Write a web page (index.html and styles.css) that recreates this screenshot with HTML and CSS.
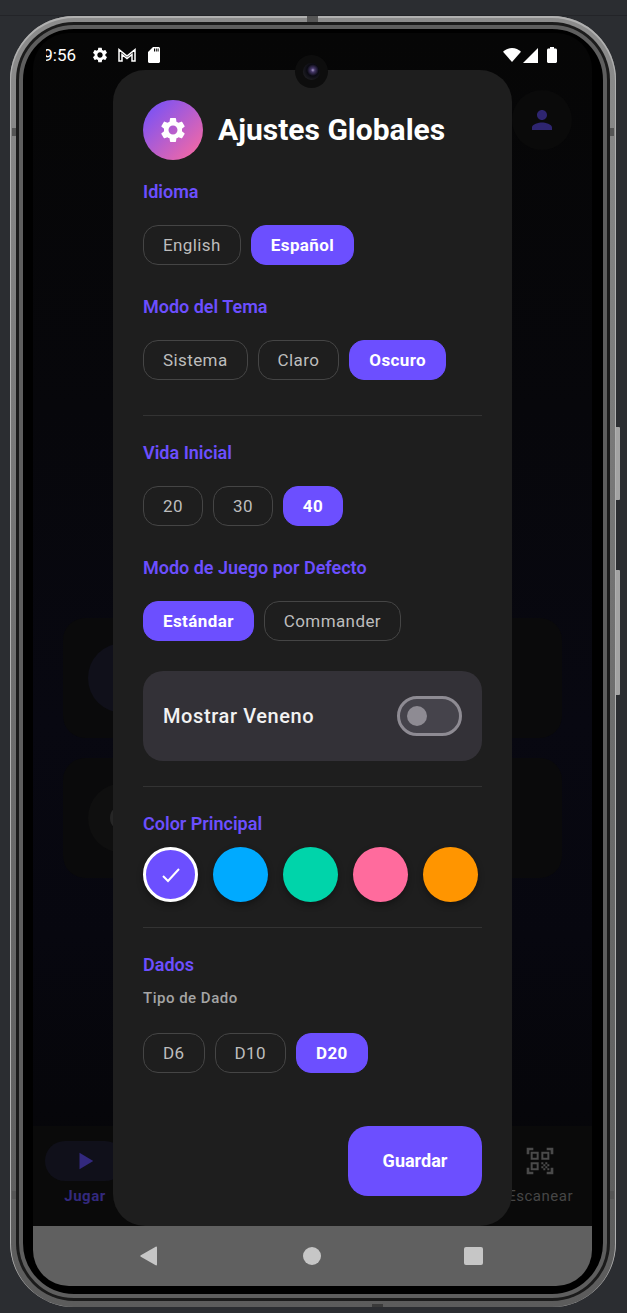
FILE: index.html
```html
<!DOCTYPE html>
<html lang="es">
<head>
  <meta charset="UTF-8" />
  <title>Ajustes Globales</title>
  <link rel="stylesheet" href="styles.css">
</head>
<body>
  <div class="topline"></div>
  <div class="phone">
    <span class="side-btn side-btn-power"></span>
    <span class="side-btn side-btn-volume"></span>
    <span class="mark mark-top"></span>
    <span class="mark mark-bottom"></span>
    <span class="mark mark-side mark-lt"></span>
    <span class="mark mark-side mark-rt"></span>
    <span class="mark mark-side mark-lb"></span>
    <span class="mark mark-side mark-rb"></span>
    <div class="ring-mid">
      <div class="ring-in">
        <div class="screen">

          <div class="statusbar">
            <span class="time"><span>9:56</span></span>
            <svg class="st-gear" viewBox="0 0 24 24"><path d="M19.14 12.94c.04-.3.06-.61.06-.94 0-.32-.02-.64-.07-.94l2.03-1.58a.49.49 0 0 0 .12-.61l-1.92-3.32a.488.488 0 0 0-.59-.22l-2.39.96c-.5-.38-1.03-.7-1.62-.94l-.36-2.54a.484.484 0 0 0-.48-.41h-3.84c-.24 0-.43.17-.47.41l-.36 2.54c-.59.24-1.13.57-1.62.94l-2.39-.96c-.22-.08-.47 0-.59.22L2.74 8.87c-.12.21-.08.47.12.61l2.03 1.58c-.05.3-.09.63-.09.94s.02.64.07.94l-2.03 1.58a.49.49 0 0 0-.12.61l1.92 3.32c.12.22.37.29.59.22l2.39-.96c.5.38 1.03.7 1.62.94l.36 2.54c.05.24.24.41.48.41h3.84c.24 0 .44-.17.47-.41l.36-2.54c.59-.24 1.13-.56 1.62-.94l2.39.96c.22.08.47 0 .59-.22l1.92-3.32c.12-.22.07-.47-.12-.61l-2.01-1.58zM12 15.6c-1.98 0-3.6-1.62-3.6-3.6s1.62-3.6 3.6-3.6 3.6 1.62 3.6 3.6-1.62 3.6-3.6 3.6z"/></svg>
            <svg class="st-mail" viewBox="0 0 18 14"><path d="M1 13V1.600L9 8l8-6.400V13h-3V6.500L9 10.500 4 6.500V13z"/></svg>
            <svg class="st-sd" viewBox="0 0 12 16"><path d="M5 0h5.500C11.300 0 12 .7 12 1.500v13c0 .8-.7 1.500-1.500 1.500h-9C.7 16 0 15.300 0 14.500V5zM6 1.500v3h1v-3zm1.800 0v3h1v-3zm1.800 0v3h1v-3z" fill-rule="evenodd"/></svg>
            <span class="st-space"></span>
            <svg class="st-wifi" viewBox="0 0 18 14"><path d="M0 3.800C2.400 1.500 5.500 0 9 0s6.600 1.500 9 3.800L9 14z"/></svg>
            <svg class="st-signal" viewBox="0 0 15 15"><path d="M15 0v15H0z"/></svg>
            <svg class="st-batt" viewBox="0 0 10 16"><path d="M3 0h4v1.500h1.500c.8 0 1.500.7 1.500 1.500v11.500c0 .8-.7 1.500-1.500 1.500h-7C.7 16 0 15.300 0 14.500V3c0-.8.7-1.500 1.500-1.500H3z"/></svg>
          </div>

          <div class="app">
            <div class="app-top">
              <div class="avatar">
                <svg viewBox="0 0 24 24"><path d="M12 12c2.210 0 4-1.790 4-4s-1.790-4-4-4-4 1.790-4 4 1.790 4 4 4zm0 2c-2.670 0-8 1.340-8 4v2h16v-2c0-2.660-5.330-4-8-4z"/></svg>
              </div>
            </div>
            <div class="bg-card"><div class="bg-circle bg-circle-blue"></div></div>
            <div class="bg-card"><div class="bg-circle"><span class="bg-glyph"></span></div></div>
          </div>

          <div class="bottomnav">
            <div class="nav-item nav-item-active">
              <div class="nav-pill">
                <svg viewBox="0 0 24 24"><path d="M6 3l15 9-15 9z"/></svg>
              </div>
              <span>Jugar</span>
            </div>
            <div class="nav-item nav-item-scan">
              <svg viewBox="0 0 24 24"><path d="M9.500 6.500v3h-3v-3h3M11 5H5v6h6V5zm-1.500 9.500v3h-3v-3h3M11 13H5v6h6v-6zm6.500-6.500v3h-3v-3h3M19 5h-6v6h6V5zm-6 8h1.500v1.500H13V13zm1.500 1.500H16V16h-1.500v-1.500zM16 13h1.500v1.500H16V13zm-3 3h1.500v1.500H13V16zm1.500 1.500H16V19h-1.500v-1.500zM16 16h1.500v1.500H16V16zm1.500-1.500H19V16h-1.500v-1.500zm0 3H19V19h-1.500v-1.500zM22 7h-2V4h-3V2h5v5zm0 15v-5h-2v3h-3v2h5zM2 22h5v-2H4v-3H2v5zM2 2v5h2V4h3V2H2z"/></svg>
              <span>Escanear</span>
            </div>
          </div>

          <div class="sysnav">
            <svg class="sys-back" viewBox="0 0 18 20"><path d="M17 1.500v17c0 .8-.6 1.200-1.300.8L.8 10.800c-.6-.4-.6-1.200 0-1.600L15.700.7c.7-.4 1.300 0 1.300.8z"/></svg>
            <span class="sys-home"></span>
            <span class="sys-recent"></span>
          </div>

          <!-- dialogo de ajustes -->
          <div class="modal">
            <div class="modal-head">
              <div class="head-icon">
                <svg viewBox="0 0 24 24"><path d="M19.140 12.940c.04-.3.06-.61.06-.94 0-.32-.02-.64-.07-.94l2.030-1.580a.49.49 0 0 0 .12-.61l-1.920-3.320a.488.488 0 0 0-.59-.22l-2.390.96c-.5-.38-1.030-.7-1.620-.94l-.36-2.540a.484.484 0 0 0-.48-.41h-3.840c-.24 0-.43.17-.47.41l-.36 2.540c-.59.24-1.130.57-1.620.94l-2.390-.96c-.22-.08-.47 0-.59.22L2.740 8.870c-.12.21-.08.47.12.61l2.030 1.580c-.05.3-.09.63-.09.94s.02.64.07.94l-2.030 1.580a.49.49 0 0 0-.12.61l1.920 3.320c.12.22.37.29.59.22l2.390-.96c.5.38 1.030.7 1.620.94l.36 2.540c.05.24.24.41.48.41h3.840c.24 0 .44-.17.47-.41l.36-2.540c.59-.24 1.130-.56 1.620-.94l2.390.96c.22.08.47 0 .59-.22l1.920-3.320c.12-.22.07-.47-.12-.61l-2.010-1.580zM12 15.600c-1.980 0-3.600-1.620-3.600-3.600s1.620-3.600 3.600-3.600 3.600 1.620 3.600 3.600-1.620 3.600-3.600 3.600z"/></svg>
              </div>
              <h1>Ajustes Globales</h1>
            </div>

            <h2 class="label label-first">Idioma</h2>
            <div class="chips">
              <span class="chip">English</span>
              <span class="chip chip-on">Español</span>
            </div>

            <h2 class="label">Modo del Tema</h2>
            <div class="chips">
              <span class="chip">Sistema</span>
              <span class="chip">Claro</span>
              <span class="chip chip-on">Oscuro</span>
            </div>

            <hr class="divider">

            <h2 class="label label-after">Vida Inicial</h2>
            <div class="chips">
              <span class="chip">20</span>
              <span class="chip">30</span>
              <span class="chip chip-on">40</span>
            </div>

            <h2 class="label">Modo de Juego por Defecto</h2>
            <div class="chips">
              <span class="chip chip-on">Estándar</span>
              <span class="chip">Commander</span>
            </div>

            <div class="toggle-row">
              <span class="toggle-text">Mostrar Veneno</span>
              <span class="switch"><span class="switch-thumb"></span></span>
            </div>

            <hr class="divider divider-toggle">

            <h2 class="label label-after">Color Principal</h2>
            <div class="swatches">
              <span class="swatch swatch-on">
                <svg viewBox="0 0 24 24"><path d="M4 13l5 5L20 6"/></svg>
              </span>
              <span class="swatch swatch-blue"></span>
              <span class="swatch swatch-green"></span>
              <span class="swatch swatch-pink"></span>
              <span class="swatch swatch-orange"></span>
            </div>

            <hr class="divider divider-toggle">

            <h2 class="label label-after">Dados</h2>
            <p class="sublabel">Tipo de Dado</p>
            <div class="chips">
              <span class="chip">D6</span>
              <span class="chip">D10</span>
              <span class="chip chip-on">D20</span>
            </div>

            <div class="modal-foot">
              <span class="save">Guardar</span>
            </div>
          </div>

          <div class="camera"><span class="lens"></span></div>
        </div>
      </div>
    </div>
  </div>
</body>
</html>
```

FILE: styles.css
```css
* {
  box-sizing: border-box;
}

body {
  margin: 0;
  width: 627px;
  height: 1313px;
  overflow: hidden;
  background-color: #2b2d31;
  padding: 0 11px 6px 10px;
  font-family: Roboto, "Liberation Sans", sans-serif;
}

.topline {
  height: 16px;
  margin: 0 -11px 0 -10px;
  border-bottom: 1px solid #232428;
}

/* marco del telefono */
.phone {
  position: relative;
  width: 606px;
  height: 1291px;
  border-radius: 64px;
  padding: 6px;
  background: linear-gradient(#8c8c8c, #6f6f6f 50%, #5c5c5c);
  box-shadow: inset 0 1px 0 1px #b0b0b0;
}

.ring-mid {
  height: 100%;
  border-radius: 58px;
  padding: 3px;
  background: #1b1b1b;
}

.ring-in {
  height: 100%;
  border-radius: 55px;
  border: 4px solid #5e5e5e;
  background: #000;
  padding: 4px 11px 8px 10px;
}

.side-btn {
  position: absolute;
  right: -4px;
  width: 4px;
  background: #a3a3a3;
  border-radius: 0 1px 1px 0;
}

.side-btn-power {
  top: 411px;
  height: 73px;
}

.side-btn-volume {
  top: 554px;
  height: 125px;
}

.mark {
  position: absolute;
  background: #555;
}

.mark-top {
  left: 297px;
  top: 0;
  width: 11px;
  height: 6px;
}

.mark-bottom {
  left: 362px;
  bottom: 0;
  width: 11px;
  height: 3px;
  background: #3a3a3a;
}

.mark-side {
  width: 4px;
  height: 8px;
}

.mark-lt {
  left: 2px;
  top: 112px;
}

.mark-rt {
  right: 2px;
  top: 112px;
}

.mark-lb {
  left: 2px;
  bottom: 108px;
}

.mark-rb {
  right: 2px;
  bottom: 108px;
}

.screen {
  position: relative;
  height: 100%;
  display: flex;
  flex-direction: column;
  border-radius: 36px;
  overflow: hidden;
  background: linear-gradient(#060606 0, #07070b 30%, #080811 55%, #07070f 72%, #050505 100%);
}

/* barra de estado */
.statusbar {
  height: 37px;
  flex: none;
  display: flex;
  align-items: center;
  padding-top: 7px;
  padding-right: 35px;
  color: #fff;
}

.statusbar svg {
  fill: #fff;
  flex: none;
}

.time {
  width: 30px;
  margin-left: 13px;
  display: flex;
  justify-content: flex-end;
  overflow: hidden;
  font-size: 17px;
  white-space: nowrap;
}

.st-gear {
  width: 18px;
  height: 18px;
  margin-left: 15px;
}

.st-mail {
  width: 18px;
  height: 14px;
  margin-left: 9px;
}

.statusbar .st-mail {
  fill: none;
}

.st-mail path {
  fill: none;
  stroke: #fff;
  stroke-width: 1.5;
}

.st-sd {
  width: 12px;
  height: 16px;
  margin-left: 12px;
}

.st-space {
  flex: 1;
}

.st-wifi {
  width: 18px;
  height: 14px;
}

.st-signal {
  width: 15px;
  height: 15px;
  margin-left: 2px;
}

.st-batt {
  width: 10px;
  height: 16px;
  margin-left: 9px;
}

/* pantalla de fondo */
.app {
  flex: 1;
  display: flex;
  flex-direction: column;
  padding: 0 30px;
  gap: 20px;
}

.app-top {
  height: 508px;
  margin-top: 20px;
  display: flex;
  justify-content: flex-end;
  margin-right: -10px;
}

.avatar {
  width: 60px;
  height: 60px;
  border-radius: 50%;
  background: #0a0a0a;
  display: flex;
  align-items: center;
  justify-content: center;
}

.avatar svg {
  width: 30px;
  height: 30px;
  fill: #2e2570;
}

.bg-card {
  height: 120px;
  border-radius: 22px;
  background: #0a0a0b;
  display: flex;
  align-items: center;
  padding-left: 25px;
}

.bg-circle {
  width: 70px;
  height: 70px;
  border-radius: 50%;
  background: #0f0f0f;
  display: flex;
  align-items: center;
  justify-content: center;
}

.bg-circle-blue {
  background: #10101a;
}

.bg-glyph {
  width: 26px;
  height: 26px;
  border-radius: 50%;
  border: 6px solid #262626;
}

/* navegacion inferior */
.bottomnav {
  height: 100px;
  flex: none;
  background: #0a0a0a;
  display: flex;
  justify-content: space-between;
  padding: 15px 19px 0 12px;
}

.nav-item {
  display: flex;
  flex-direction: column;
  align-items: center;
  font-size: 15px;
  letter-spacing: 0.5px;
  color: #3b3b3b;
}

.nav-item-active {
  font-weight: 700;
  color: #33297e;
}

.nav-item-active span {
  margin-top: 6px;
}

.nav-pill {
  width: 80px;
  height: 40px;
  border-radius: 20px;
  background: #10101a;
  display: flex;
  align-items: center;
  justify-content: center;
}

.nav-pill svg {
  width: 22px;
  height: 22px;
  fill: #33297e;
}

.nav-item-scan {
  color: #464646;
}

.nav-item-scan svg {
  width: 32px;
  height: 32px;
  margin-top: 4px;
  fill: #4a4a4a;
}

.nav-item-scan span {
  margin-top: 10px;
}

/* barra del sistema */
.sysnav {
  height: 60px;
  flex: none;
  background: #606060;
  display: flex;
  align-items: center;
  padding-left: 107px;
}

.sys-back {
  width: 18px;
  height: 20px;
  fill: #c6c6c6;
}

.sys-home {
  width: 18px;
  height: 18px;
  margin-left: 145px;
  border-radius: 50%;
  background: #c6c6c6;
}

.sys-recent {
  width: 19px;
  height: 18px;
  margin-left: 143px;
  border-radius: 2px;
  background: #c6c6c6;
}

/* dialogo */
.modal {
  position: absolute;
  left: 80px;
  right: 80px;
  top: 37px;
  bottom: 60px;
  border-radius: 32px;
  background: #1e1e1e;
  padding: 30px;
  display: flex;
  flex-direction: column;
}

.modal > * {
  flex: none;
}

.modal-head {
  display: flex;
  align-items: center;
  gap: 15px;
}

.head-icon {
  width: 60px;
  height: 60px;
  border-radius: 50%;
  background: linear-gradient(135deg, #6c4fff, #ff6b9d);
  display: flex;
  align-items: center;
  justify-content: center;
}

.head-icon svg {
  width: 30px;
  height: 30px;
  fill: #fff;
}

h1 {
  margin: 0;
  font-size: 30px;
  line-height: 36px;
  font-weight: 700;
  color: #fff;
}

.label {
  margin: 32px 0 23px;
  font-size: 18px;
  line-height: 20px;
  font-weight: 600;
  color: #6c4fff;
}

.label-first {
  margin-top: 22px;
}

.label-after {
  margin-top: 27px;
}

.chips {
  display: flex;
  gap: 10px;
}

.chip {
  height: 40px;
  padding: 0 19px;
  display: flex;
  align-items: center;
  border: 1px solid #454545;
  border-radius: 15px;
  font-size: 17px;
  letter-spacing: 0.4px;
  color: #bdbdbd;
}

.chip-on {
  background: #6c4fff;
  border-color: #6c4fff;
  color: #fff;
  font-weight: 700;
}

.divider {
  width: 100%;
  height: 1px;
  margin: 35px 0 0;
  border: 0;
  background: #333;
}

.divider-toggle {
  margin-top: 25px;
}

.toggle-row {
  height: 90px;
  margin-top: 30px;
  padding: 0 20px;
  border-radius: 20px;
  background: #333137;
  display: flex;
  align-items: center;
  justify-content: space-between;
}

.toggle-text {
  font-size: 20px;
  font-weight: 500;
  letter-spacing: 0.6px;
  color: #f2f2f2;
}

.switch {
  width: 65px;
  height: 40px;
  border-radius: 20px;
  border: 3px solid #8e8b93;
  background: #45434b;
  display: flex;
  align-items: center;
  padding-left: 7px;
}

.switch-thumb {
  width: 20px;
  height: 20px;
  border-radius: 50%;
  background: #8e8b93;
}

.swatches {
  display: flex;
  gap: 15px;
  margin-top: -10px;
}

.swatch {
  width: 55px;
  height: 55px;
  border-radius: 50%;
  box-shadow: 0 3px 6px rgba(0, 0, 0, 0.35);
}

.swatch-on {
  background: #6c4fff;
  border: 3px solid #fff;
  display: flex;
  align-items: center;
  justify-content: center;
}

.swatch-on svg {
  width: 24px;
  height: 24px;
  fill: none;
  stroke: #fff;
  stroke-width: 2;
}

.swatch-blue {
  background: #00aaff;
}

.swatch-green {
  background: #00d4aa;
}

.swatch-pink {
  background: #ff6b9d;
}

.swatch-orange {
  background: #ff9500;
}

.label-after + .sublabel {
  margin-top: -10px;
}

.sublabel {
  margin: 0 0 25px;
  font-size: 15px;
  line-height: 20px;
  font-weight: 500;
  letter-spacing: 0.5px;
  color: #a5a5a5;
}

.modal-foot {
  margin-top: 53px;
  display: flex;
  justify-content: flex-end;
}

.save {
  width: 134px;
  height: 70px;
  padding-bottom: 2px;
  border-radius: 20px;
  background: #6c4fff;
  color: #fff;
  font-size: 18px;
  font-weight: 700;
  display: flex;
  align-items: center;
  justify-content: center;
}

/* camara */
.camera {
  position: absolute;
  left: 262px;
  top: 22px;
  width: 33px;
  height: 33px;
  border-radius: 50%;
  background: #0d0d0d;
  display: flex;
  align-items: center;
  justify-content: center;
}

.lens {
  width: 17px;
  height: 17px;
  border-radius: 50%;
  background: radial-gradient(circle at 58% 42%, #a99cc8 0, #46386a 14%, #0a0a12 42%, #1e1e22 75%, #2a2a2e 100%);
}
```
